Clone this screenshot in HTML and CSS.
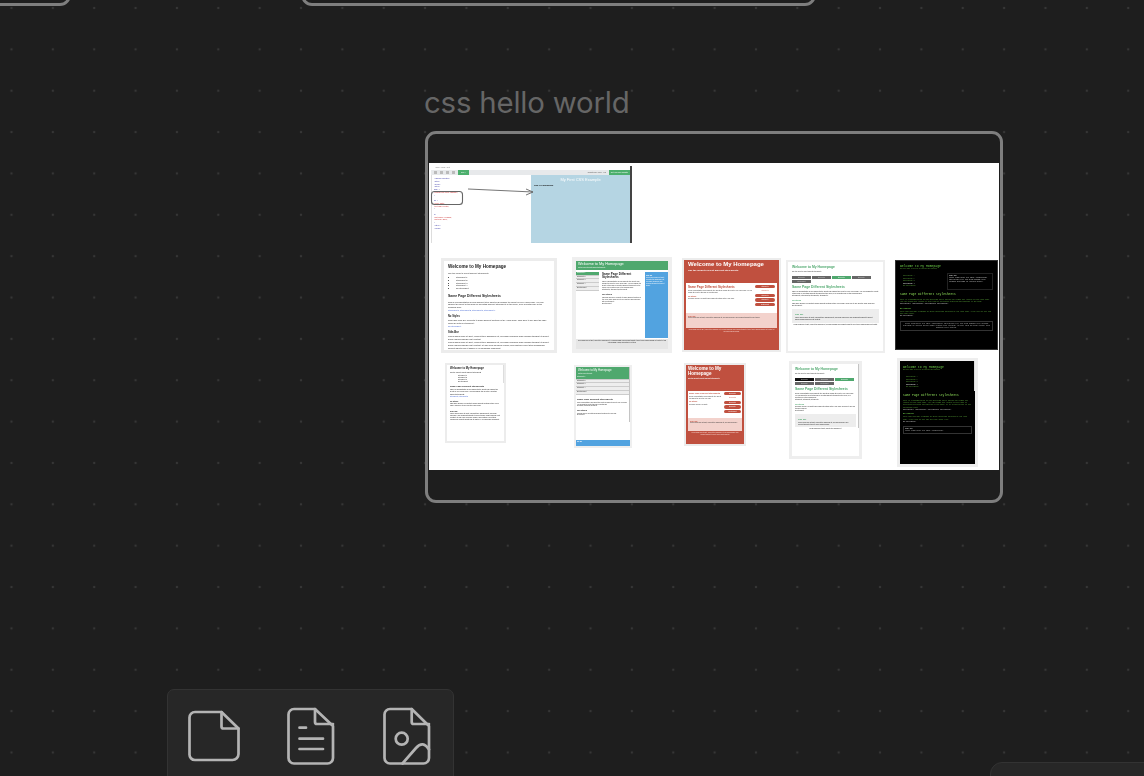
FILE: index.html
```html
<!DOCTYPE html>
<html lang="en">
<head>
  <meta charset="UTF-8" />
  <meta name="viewport" content="width=device-width, initial-scale=1.0" />
  <title>css hello world</title>
  <link rel="stylesheet" href="styles.css">
</head>
<body>
  <div class="canvas">
    <div class="frame frame-left"></div>
    <div class="frame frame-mid"></div>

    <div class="node-title">css hello world</div>
    <div class="frame frame-main">
      <div class="shot">

        <!-- editor screenshot at the top -->
        <div class="mini editor">
          <div class="ed-crumb">Home / CSS / Tryit</div>
          <div class="ed-bar">
            <span class="ed-btn"></span><span class="ed-btn"></span><span class="ed-btn"></span><span class="ed-btn"></span>
            <span class="ed-run">Run &gt;</span>
            <span class="ed-space"></span>
            <span class="ed-note">Result Size: 668 x 442</span>
            <span class="ed-get">Get your own website</span>
          </div>
          <div class="ed-body">
            <div class="ed-code">
              <p>&lt;!DOCTYPE html&gt;</p><p>&lt;html&gt;</p><p>&lt;head&gt;</p><p>&lt;style&gt;</p><p>body {</p>
              <p class="red">&nbsp;background-color: lightblue;</p><p>}</p><p>&nbsp;</p><p>h1 {</p>
              <p class="red">&nbsp;color: white;</p><p class="red">&nbsp;text-align: center;</p><p>}</p><p>&nbsp;</p><p>p {</p>
              <p class="red">&nbsp;font-family: verdana;</p><p class="red">&nbsp;font-size: 20px;</p><p>}</p><p>&lt;/style&gt;</p><p>&lt;/head&gt;</p>
            </div>
            <div class="ed-result">
              <div class="ed-h1">My First CSS Example</div>
              <div class="ed-p">This is a paragraph.</div>
            </div>
          </div>
        </div>

        <!-- first row of stylesheets -->
        <div class="mini plain a1">
          <div class="thumb-bar"></div>
          <h4>Welcome to My Homepage</h4>
          <p>Use the menu to select different Stylesheets</p>
          <ul><li>Stylesheet 1</li><li>Stylesheet 2</li><li>Stylesheet 3</li><li>Stylesheet 4</li><li>No Stylesheet</li></ul>
          <h5>Same Page Different Stylesheets</h5>
          <p>This is a demonstration of how different style sheets can change the layout of your HTML page. You can change the layout of this page by selecting different stylesheets in the menu, or by selecting one of the following links:</p>
          <p class="blue">Stylesheet1, Stylesheet2, Stylesheet3, Stylesheet4.</p>
          <h6>No Styles</h6>
          <p>This page uses DIV elements to group different sections of the HTML page. Click here to see how the page looks like with no stylesheet:</p>
          <p class="blue">No Stylesheet.</p>
          <h6>Side-Bar</h6>
          <p>Lorem ipsum dolor sit amet, consectetuer adipiscing elit, sed diam nonummy nibh euismod tincidunt ut laoreet dolore magna aliquam erat volutpat.</p>
          <p>Lorem ipsum dolor sit amet, consectetuer adipiscing elit, sed diam nonummy nibh euismod tincidunt ut laoreet dolore magna aliquam erat volutpat. Ut wisi enim ad minim veniam, quis nostrud exerci tation ullamcorper suscipit lobortis nisl ut aliquip ex ea commodo consequat.</p>
        </div>

        <div class="mini green-page b1">
          <div class="gp-head"><b>Welcome to My Homepage</b><small>Use the menu to select different Stylesheets</small></div>
          <div class="gp-cols">
            <div class="gp-nav"><span class="on">Stylesheet 1</span><span>Stylesheet 2</span><span>Stylesheet 3</span><span>Stylesheet 4</span><span>No Stylesheet</span></div>
            <div class="gp-main">
              <h5>Same Page Different Stylesheets</h5>
              <p>This is a demonstration of how different style sheets can change the layout of your HTML page. You can change the layout of this page by selecting different stylesheets in the menu, or by selecting one of the following links:</p>
              <p>Stylesheet1, Stylesheet2, Stylesheet3.</p>
              <h6>No Styles</h6>
              <p>This page uses DIV elements to group different sections of the HTML page. Click here to see how the page looks like with no stylesheet:</p>
              <p>No Stylesheet.</p>
            </div>
            <div class="gp-side"><b>Side-Bar</b><p>Lorem ipsum dolor sit amet, consectetuer adipiscing elit, sed diam nonummy nibh euismod tincidunt ut laoreet dolore.</p></div>
          </div>
          <div class="gp-foot">Lorem ipsum dolor sit amet, consectetuer adipiscing elit, sed diam nonummy nibh euismod tincidunt ut laoreet dolore magna aliquam erat volutpat. Ut wisi enim ad minim veniam, quis nostrud exerci tation.</div>
        </div>

        <div class="mini red-page c1">
          <div class="rp-head"><b>Welcome to My Homepage</b><small>Use the menu to select different Stylesheets</small></div>
          <div class="rp-body">
            <div class="rp-cols">
              <div class="rp-main">
                <h5>Same Page Different Stylesheets</h5>
                <p>This is a demonstration of how different style sheets can change the layout of your HTML page. You can change the layout of this page by selecting links:</p>
                <h6>No Styles</h6>
                <p>This page uses DIV elements to group different sections of the HTML page.</p>
              </div>
              <div class="rp-nav"><span>Stylesheet 1</span><span class="off">Stylesheet 2</span><span>Stylesheet 3</span><span>Stylesheet 4</span><span>No Stylesheet</span></div>
            </div>
            <div class="rp-side"><h6>Side-Bar</h6><p>Lorem ipsum dolor sit amet, consectetuer adipiscing elit, sed diam nonummy nibh euismod tincidunt ut laoreet dolore.</p></div>
          </div>
          <div class="rp-foot">Lorem ipsum dolor sit amet, consectetuer adipiscing elit, sed diam nonummy nibh euismod tincidunt ut laoreet dolore magna aliquam erat volutpat. Ut wisi enim ad minim veniam.</div>
        </div>

        <div class="mini tab-page d1">
          <h4>Welcome to My Homepage</h4>
          <small>Use the menu to select different Stylesheets</small>
          <div class="tabs"><span>Stylesheet 1</span><span>Stylesheet 2</span><span class="on">Stylesheet 3</span><span>Stylesheet 4</span><span>No Stylesheet</span></div>
          <h5>Same Page Different Stylesheets</h5>
          <p>This is a demonstration of how different style sheets can change the layout of your HTML page. You can change the layout of this page by selecting different stylesheets in the menu, or by selecting one of the following links:</p>
          <p>Stylesheet1, Stylesheet2, Stylesheet3, Stylesheet4.</p>
          <h6>No Styles</h6>
          <p>This page uses DIV elements to group different sections of the HTML page. Click here to see how the page looks like:</p>
          <p>No Stylesheet.</p>
          <div class="tp-side"><h6>Side-Bar</h6><p>Lorem ipsum dolor sit amet, consectetuer adipiscing elit, sed diam nonummy nibh euismod tincidunt ut laoreet dolore magna aliquam erat volutpat.</p></div>
          <p class="tp-foot">Lorem ipsum dolor sit amet, consectetuer adipiscing elit, sed diam nonummy nibh euismod tincidunt ut laoreet dolore magna aliquam erat volutpat.</p>
        </div>

        <div class="mini term-page e1">
          <h4>Welcome to My Homepage</h4>
          <small>Use the menu to select different Stylesheets</small>
          <div class="tm-cols">
            <div class="tm-nav"><span>Stylesheet 1</span><span>Stylesheet 2</span><span>Stylesheet 3</span><span class="on">Stylesheet 4</span><span>No Stylesheet</span></div>
            <div class="tm-side"><b>Side-Bar</b><br>Lorem ipsum dolor sit amet, consectetuer adipiscing elit, sed diam nonummy nibh euismod tincidunt ut laoreet dolore.</div>
          </div>
          <h5>Same Page Different Stylesheets</h5>
          <p>This is a demonstration of how different style sheets can change the layout of your HTML page. You can change the layout of this page by selecting different stylesheets in the menu:</p>
          <p class="white">Stylesheet1, Stylesheet2, Stylesheet3, Stylesheet4.</p>
          <h6>No Styles</h6>
          <p>This page uses DIV elements to group different sections of the HTML page. Click here to see how the page looks:</p>
          <p class="white">No Stylesheet.</p>
          <div class="tm-foot">Lorem ipsum dolor sit amet, consectetuer adipiscing elit, sed diam nonummy nibh euismod tincidunt ut laoreet dolore magna aliquam erat volutpat. Ut wisi enim ad minim veniam, quis nostrud exerci tation.</div>
        </div>

        <!-- second row, narrower windows -->
        <div class="mini plain a2">
          <h4>Welcome to My Homepage</h4>
          <p>Use the menu to select different Stylesheets</p>
          <ul><li>Stylesheet 1</li><li>Stylesheet 2</li><li>Stylesheet 3</li><li>No Stylesheet</li></ul>
          <h5>Same Page Different Stylesheets</h5>
          <p>This is a demonstration of how different style sheets can change the layout of your HTML page. You can change the layout by selecting different stylesheets:</p>
          <p class="blue">Stylesheet1, Stylesheet2.</p>
          <h6>No Styles</h6>
          <p>This page uses DIV elements to group different sections of the HTML page. Click here to see how the page looks.</p>
          <h6>Side-Bar</h6>
          <p>Lorem ipsum dolor sit amet, consectetuer adipiscing elit, sed diam nonummy nibh euismod tincidunt ut laoreet dolore magna aliquam erat volutpat. Ut wisi enim ad minim veniam, quis nostrud exerci tation ullamcorper suscipit lobortis nisl ut aliquip ex ea commodo consequat.</p>
          <div class="scroll"></div>
        </div>

        <div class="mini green-page narrow b2">
          <div class="gp-head"><b>Welcome to My Homepage</b><small>Use the menu to select</small></div>
          <div class="gp-nav"><span class="on">Stylesheet 1</span><span>Stylesheet 2</span><span>Stylesheet 3</span><span>Stylesheet 4</span><span>No Stylesheet</span></div>
          <div class="gp-main">
            <h5>Same Page Different Stylesheets</h5>
            <p>This is a demonstration of how different style sheets can change the layout of your HTML page. You can change the layout of this page by selecting links:</p>
            <p>Stylesheet1, Stylesheet2, Stylesheet3.</p>
            <h6>No Styles</h6>
            <p>This page uses DIV elements to group different sections of the HTML page.</p>
            <p>No Stylesheet.</p>
          </div>
          <div class="gp-side"><b>Side-Bar</b></div>
          <div class="scroll"></div>
        </div>

        <div class="mini red-page narrow c2">
          <div class="rp-head"><b>Welcome to My Homepage</b><small>Use the menu to select different Stylesheets</small></div>
          <div class="rp-body">
            <div class="rp-cols">
              <div class="rp-main">
                <h5>Same Page Different Stylesheets</h5>
                <p>This is a demonstration of how different style sheets can change the layout of your page.</p>
                <h6>No Styles</h6>
                <p>This page uses DIV elements.</p>
              </div>
              <div class="rp-nav"><span>Stylesheet 1</span><span class="off">Stylesheet 2</span><span>Stylesheet 3</span><span>Stylesheet 4</span><span>No Stylesheet</span></div>
            </div>
            <div class="rp-side"><h6>Side-Bar</h6><p>Lorem ipsum dolor sit amet, consectetuer adipiscing elit, sed diam nonummy.</p></div>
          </div>
          <div class="rp-foot">Lorem ipsum dolor sit amet, consectetuer adipiscing elit, sed diam nonummy nibh euismod tincidunt ut laoreet dolore magna aliquam.</div>
        </div>

        <div class="mini tab-page d2">
          <h4>Welcome to My Homepage</h4>
          <small>Use the menu to select different Stylesheets</small>
          <div class="tabs"><span class="dark">Stylesheet 1</span><span>Stylesheet 2</span><span class="on">Stylesheet 3</span><span>Stylesheet 4</span><span>No Stylesheet</span></div>
          <h5>Same Page Different Stylesheets</h5>
          <p>This is a demonstration of how different style sheets can change the layout of your HTML page. You can change the layout of this page by selecting different stylesheets in the menu, or by selecting one of the following links:</p>
          <p>Stylesheet1, Stylesheet2, Stylesheet3.</p>
          <h6>No Styles</h6>
          <p>This page uses DIV elements to group different sections of the HTML page. Click here to see how the page looks like:</p>
          <p>No Stylesheet.</p>
          <div class="tp-side"><h6>Side-Bar</h6><p>Lorem ipsum dolor sit amet, consectetuer adipiscing elit, sed diam nonummy nibh euismod tincidunt ut laoreet dolore magna aliquam.</p></div>
          <p class="tp-foot">Lorem ipsum dolor sit amet, consectetuer adipiscing elit.</p>
          <div class="scroll"></div>
        </div>

        <div class="mini term-page e2">
          <h4>Welcome to My Homepage</h4>
          <small>Use the menu to select different Stylesheets</small>
          <div class="tm-nav"><span>Stylesheet 1</span><span>Stylesheet 2</span><span>Stylesheet 3</span><span class="on">Stylesheet 4</span><span>No Stylesheet</span></div>
          <h5>Same Page Different Stylesheets</h5>
          <p>This is a demonstration of how different style sheets can change the layout of your HTML page. You can change the layout of this page by selecting different stylesheets in the menu, or by selecting one of the following links:</p>
          <p class="white">Stylesheet1, Stylesheet2, Stylesheet3, Stylesheet4.</p>
          <h6>No Styles</h6>
          <p>This page uses DIV elements to group different sections of the HTML page. Click here to see how the page looks like:</p>
          <p class="white">No Stylesheet.</p>
          <div class="tm-foot"><b>Side-Bar</b><br>Lorem ipsum dolor sit amet, consectetuer.</div>
          <div class="scroll"></div>
        </div>

        <!-- annotation drawn over the editor -->
        <svg class="note" width="110" height="50" viewBox="0 0 110 50" fill="none" stroke="#666">
          <rect x="2.5" y="28.5" width="31" height="13" rx="3" stroke-width="1.1"/>
          <path d="M39 26 L104 29 M97 26 L104 29 L97 32" stroke-width=".9"/>
        </svg>
      </div>
    </div>

    <div class="toolbar">
      <svg class="icon-blank" width="52" height="52" viewBox="0 0 52 52" fill="none" stroke="#b4b4b4" stroke-width="2.7" stroke-linejoin="round" stroke-linecap="round">
        <path d="M7 2 H33.5 L50.5 18.5 V44 a6 6 0 0 1 -6 6 H7 a5.5 5.5 0 0 1 -5.5 -6 V7.5 a5.5 5.5 0 0 1 5.5 -5.5 Z"/>
        <path d="M33.5 2 V16.5 a2 2 0 0 0 2 2 H50.5"/>
      </svg>
      <svg width="48" height="58" viewBox="0 0 48 58" fill="none" stroke="#b4b4b4" stroke-width="2.7" stroke-linejoin="round" stroke-linecap="round">
        <path d="M7 2 H28 L46 19 V51 a5.5 5.5 0 0 1 -5.5 5.5 H7 a5.5 5.5 0 0 1 -5.5 -5.5 V7.5 a5.5 5.5 0 0 1 5.5 -5.5 Z"/>
        <path d="M28 2 V15 a2 2 0 0 0 2 2 H46"/>
        <path d="M12.5 20.7 H19 M12.5 31.7 H36 M12.5 42 H36"/>
      </svg>
      <svg width="48" height="58" viewBox="0 0 48 58" fill="none" stroke="#b4b4b4" stroke-width="2.7" stroke-linejoin="round" stroke-linecap="round">
        <path d="M7 2 H28.7 L46 19 V51 a5.5 5.5 0 0 1 -5.5 5.5 H7 a5.5 5.5 0 0 1 -5.5 -5.5 V7.5 a5.5 5.5 0 0 1 5.5 -5.5 Z"/>
        <path d="M28.7 2 V15 a2 2 0 0 0 2 2 H46"/>
        <circle cx="18.7" cy="31.7" r="6"/>
        <path d="M19.5 56.5 L33 41 Q40 33 46 42.5"/>
      </svg>
    </div>
    <div class="panel-corner"></div>
  </div>
</body>
</html>
```

FILE: styles.css
```css
html, body {
  margin: 0;
  height: 100%;
  overflow: hidden;
}
body {
  font-family: 'Liberation Sans', Arial, sans-serif;
  background: #1e1e1e;
}
.canvas {
  position: relative;
  width: 1144px;
  height: 776px;
  overflow: hidden;
  background-color: #1e1e1e;
  background-image: radial-gradient(circle, #363636 1px, transparent 1.6px);
  background-size: 41.37px 41.37px;
  background-position: -9.2px -12.7px;
}
p, h4, h5, h6, ul {
  margin: 0;
  padding: 0;
}

/* nodes on the board */
.frame {
  position: absolute;
  box-sizing: border-box;
  border: 3px solid #7e7e7e;
  border-radius: 11px;
  background: #1e1e1e;
}
.frame-left {
  left: -60px;
  top: -40px;
  width: 131px;
  height: 46px;
}
.frame-mid {
  left: 301px;
  top: -40px;
  width: 515px;
  height: 46px;
}
.frame-main {
  left: 425px;
  top: 131px;
  width: 578px;
  height: 372px;
  padding: 29px 1px 0;
}
.node-title {
  position: absolute;
  left: 424px;
  top: 85px;
  font-family: Inter, 'Liberation Sans', sans-serif;
  font-size: 29.4px;
  line-height: 36px;
  letter-spacing: -0.2px;
  color: #666;
  white-space: nowrap;
}

.shot {
  position: relative;
  height: 307px;
  background: #fff;
  overflow: hidden;
}
.shot > .mini {
  filter: blur(0.6px);
}
.mini {
  position: absolute;
  box-sizing: border-box;
  overflow: hidden;
  background: #fff;
  color: #222;
  font-size: 2.2px;
  line-height: 1.35;
}
.scroll {
  position: absolute;
  right: 0;
  top: 0;
  width: 1.5px;
  height: 70%;
  background: #c4c4c4;
}
.note {
  position: absolute;
  left: 0;
  top: 0;
  filter: blur(0.4px);
}

/* editor */
.editor {
  left: 2px;
  top: 3px;
  width: 201px;
  height: 77px;
  border-right: 2px solid #444;
}
.ed-crumb {
  height: 4px;
  font-size: 1.8px;
  padding-left: 4px;
  color: #777;
}
.ed-bar {
  display: flex;
  align-items: center;
  gap: 3px;
  height: 5px;
  padding-left: 3px;
  background: #e7e9eb;
  font-size: 1.8px;
}
.ed-btn {
  width: 3px;
  height: 3px;
  background: #bbb;
}
.ed-run {
  background: #4caf6d;
  color: #fff;
  padding: 0 3px;
  line-height: 5px;
}
.ed-space {
  flex: 1;
}
.ed-note {
  color: #555;
}
.ed-get {
  background: #4caf6d;
  color: #fff;
  padding: 0 2px;
  line-height: 5px;
}
.ed-body {
  display: flex;
  height: 68px;
}
.ed-code {
  width: 100px;
  box-sizing: border-box;
  padding: 2px 0 0 2px;
  font-size: 1.9px;
  line-height: 2.75px;
  color: #3a3aa8;
  border-left: 1px solid #ddd;
}
.ed-code .red {
  color: #c33;
}
.ed-result {
  flex: 1;
  background: #b5d5e3;
}
.ed-h1 {
  margin-top: 2px;
  text-align: center;
  font-size: 4px;
  color: #fff;
}
.ed-p {
  margin: 2px 0 0 3px;
  font-size: 2.1px;
  font-weight: bold;
  color: #111;
}

/* plain page */
.plain {
  border: 3px solid #ececec;
  padding: 3px 4px;
  font-size: 2.1px;
}
.plain h4 {
  font-size: 4.6px;
  margin-bottom: 2px;
}
.plain h5 {
  font-size: 3.4px;
  margin: 4px 0 2px;
}
.plain h6 {
  font-size: 2.6px;
  margin: 3px 0 1px;
}
.plain ul {
  padding-left: 8px;
  margin: 1px 0;
}
.plain .blue {
  color: #3a5fd0;
}
.thumb-bar {
  position: absolute;
  left: -3px;
  top: -3px;
  width: 2px;
  height: 17px;
  background: #6b8a78;
}
.a1 { left: 12px; top: 95px; width: 116px; height: 95px; }
.a2 { left: 16px; top: 200px; width: 61px; height: 80px; padding: 2px 3px; font-size: 1.6px; border-width: 2px; }
.a2 h4 { font-size: 2.7px; margin-bottom: 1px; }
.a2 h5 { font-size: 2.2px; margin: 2px 0 1px; }
.a2 h6 { font-size: 1.8px; margin: 2px 0 1px; }
.a2 .scroll { height: 18px; background: #ddd; }

/* green page */
.green-page {
  border: 4px solid #efefef;
  font-size: 1.5px;
}
.gp-head {
  background: #4fa86e;
  color: #fff;
  padding: 1px 2px;
  height: 9px;
  box-sizing: border-box;
}
.gp-head b {
  display: block;
  font-size: 3.8px;
  font-weight: normal;
  line-height: 4.5px;
}
.gp-head small {
  display: block;
  font-size: 1.4px;
}
.gp-cols {
  display: flex;
  height: 66px;
  margin-top: 2px;
}
.gp-nav {
  display: flex;
  flex-direction: column;
  flex: none;
  width: 23px;
  font-size: 1.5px;
}
.gp-nav span {
  background: #eee;
  border-bottom: 1px solid #ccc;
  line-height: 2.7px;
  padding-left: 1px;
}
.gp-nav .on {
  background: #4fa86e;
  color: #fff;
}
.gp-main {
  flex: 1;
  padding: 1px 3px 0 3px;
}
.gp-main h5 {
  font-size: 3px;
  line-height: 3px;
  margin-bottom: 2px;
}
.gp-main h6 {
  font-size: 2.2px;
  margin: 2px 0 1px;
}
.gp-side {
  flex: none;
  width: 23px;
  background: #52a3e0;
  color: #fff;
  padding: 3px 1px;
  box-sizing: border-box;
}
.gp-foot {
  margin-top: 1px;
  height: 12px;
  background: #e6e6e6;
  font-size: 1.3px;
  line-height: 2px;
  padding: 1px;
  text-align: center;
}
.b1 { left: 143px; top: 94px; width: 100px; height: 96px; }
.b2 { left: 145px; top: 202px; width: 58px; height: 83px; border-width: 2px; font-size: 1.2px; }
.narrow .gp-nav {
  width: auto;
}
.narrow .gp-head b {
  font-size: 2.8px;
}
.narrow .gp-main {
  padding: 3px 1px 0;
  height: 42px;
}
.narrow .gp-main h5 {
  font-size: 2.3px;
  line-height: 2.4px;
}
.narrow .gp-side {
  width: auto;
  height: 7px;
  padding: 1px;
}

/* red page */
.red-page {
  border: 2px solid #ececec;
  background: #c0503f;
  color: #333;
  font-size: 1.4px;
}
.rp-head {
  height: 21px;
  padding: 1px 4px;
  color: #fff;
}
.rp-head b {
  display: block;
  font-size: 6px;
  line-height: 7px;
}
.rp-head small {
  display: block;
  font-size: 2.4px;
  line-height: 5px;
  font-weight: bold;
}
.rp-body {
  margin: 0 2px;
  background: #fff;
}
.rp-cols {
  display: flex;
  height: 30px;
  padding: 2px;
  gap: 2px;
  box-sizing: border-box;
}
.rp-main {
  flex: 1;
}
.rp-main h5 {
  color: #c0503f;
  font-size: 3px;
  margin-bottom: 1px;
}
.rp-main h6 {
  color: #c0503f;
  font-size: 1.8px;
  margin: 1px 0;
}
.rp-nav {
  display: flex;
  flex-direction: column;
  gap: 1px;
  width: 20px;
  text-align: center;
  font-size: 1.3px;
}
.rp-nav span {
  background: #c0503f;
  color: #fff;
  border-radius: 2px;
  line-height: 3.4px;
}
.rp-nav .off {
  background: #fff;
  color: #c0503f;
}
.rp-side {
  background: #f3d2cc;
  padding: 2px;
  height: 15px;
  box-sizing: border-box;
}
.rp-side h6 {
  color: #c0503f;
  font-size: 1.8px;
}
.rp-foot {
  padding: 1px 4px;
  color: #f6d9d3;
  font-size: 1.3px;
  line-height: 2px;
  text-align: center;
}
.c1 { left: 253px; top: 95px; width: 99px; height: 94px; }
.c2 { left: 255px; top: 200px; width: 62px; height: 83px; }
.c2 .rp-head { height: 24px; padding: 1px 2px; }
.c2 .rp-head b { font-size: 4.6px; line-height: 5.2px; }
.c2 .rp-head small { font-size: 1.5px; line-height: 2.2px; margin-top: 2px; }
.c2 .rp-main h5 { font-size: 2px; }
.c2 .rp-nav { width: 17px; }
.c2 .rp-cols { height: 27px; padding: 1px; }
.c2 .rp-side { height: 13px; }

/* tabs page */
.tab-page {
  border: 2px solid #eeeeee;
  padding: 3px 4px;
  font-size: 1.6px;
}
.tab-page h4 {
  color: #4fa86e;
  font-size: 3.4px;
}
.tab-page small {
  display: block;
  font-size: 1.5px;
  margin: 1px 0 3px;
}
.tabs {
  display: flex;
  flex-wrap: wrap;
  gap: 1px;
  font-size: 1.3px;
}
.tabs span {
  flex: 0 0 19px;
  background: #666;
  color: #ddd;
  text-align: center;
  line-height: 3.4px;
}
.tabs .on {
  background: #4fa86e;
  color: #fff;
}
.tabs .dark {
  background: #111;
}
.tab-page h5 {
  color: #4fa86e;
  font-size: 3.4px;
  margin: 2px 0 1px;
}
.tab-page h6 {
  color: #4fa86e;
  font-size: 2px;
  margin: 2px 0 1px;
}
.tp-side {
  background: #ededed;
  padding: 2px 3px;
  margin-top: 2px;
}
.tp-foot {
  font-size: 1.3px;
  line-height: 1.7px;
  margin-top: 1px;
  text-align: center;
}
.d1 { left: 357px; top: 97px; width: 99px; height: 93px; }
.d2 { left: 360px; top: 198px; width: 73px; height: 98px; padding: 3px 3px; border-width: 3px; font-size: 1.4px; }

/* terminal page */
.term-page {
  background: #000;
  border: 1px solid #333;
  color: #5fae3c;
  font-family: 'Liberation Mono', monospace;
  font-size: 1.6px;
  padding: 3px 4px;
}
.term-page h4 {
  font-size: 3.1px;
  font-weight: normal;
  color: #6fd04a;
}
.term-page small {
  display: block;
  font-size: 1.4px;
  margin-bottom: 3px;
}
.tm-cols {
  display: flex;
  justify-content: space-between;
}
.tm-nav {
  display: flex;
  flex-direction: column;
  padding: 2px 3px;
  line-height: 2.6px;
}
.tm-nav .on {
  color: #fff;
}
.tm-side {
  width: 42px;
  color: #cfcfcf;
  border: 1px solid #222;
  padding: 1px;
}
.term-page h5 {
  font-size: 3px;
  font-weight: normal;
  color: #8fdf5a;
  margin: 3px 0 2px;
}
.term-page h6 {
  font-size: 2px;
  color: #6fd04a;
  margin: 2px 0 1px;
}
.term-page .white {
  color: #ddd;
}
.tm-foot {
  margin-top: 3px;
  border: 1px solid #333;
  color: #bbb;
  padding: 1px;
  text-align: center;
  line-height: 2px;
}
.e1 { left: 466px; top: 97px; width: 103px; height: 90px; }
.e2 {
  left: 468px;
  top: 195px;
  width: 81px;
  height: 109px;
  border: 3px solid #eeeeee;
  padding: 4px 3px;
}
.e2 .tm-foot {
  text-align: left;
}
.e2 .scroll {
  height: 30px;
  background: #ddd;
}

/* tool palette */
.toolbar {
  position: absolute;
  left: 167px;
  top: 689px;
  box-sizing: border-box;
  width: 287px;
  height: 110px;
  display: flex;
  align-items: flex-start;
  gap: 48px;
  padding: 17px 0 0 20px;
  background: #272727;
  border: 1px solid #333;
  border-radius: 7px;
}
.icon-blank {
  margin: 3px -1px 0 0;
}
.panel-corner {
  position: absolute;
  left: 990px;
  top: 762px;
  width: 220px;
  height: 60px;
  background: #272727;
  border: 1px solid #333;
  border-radius: 12px;
}
```
